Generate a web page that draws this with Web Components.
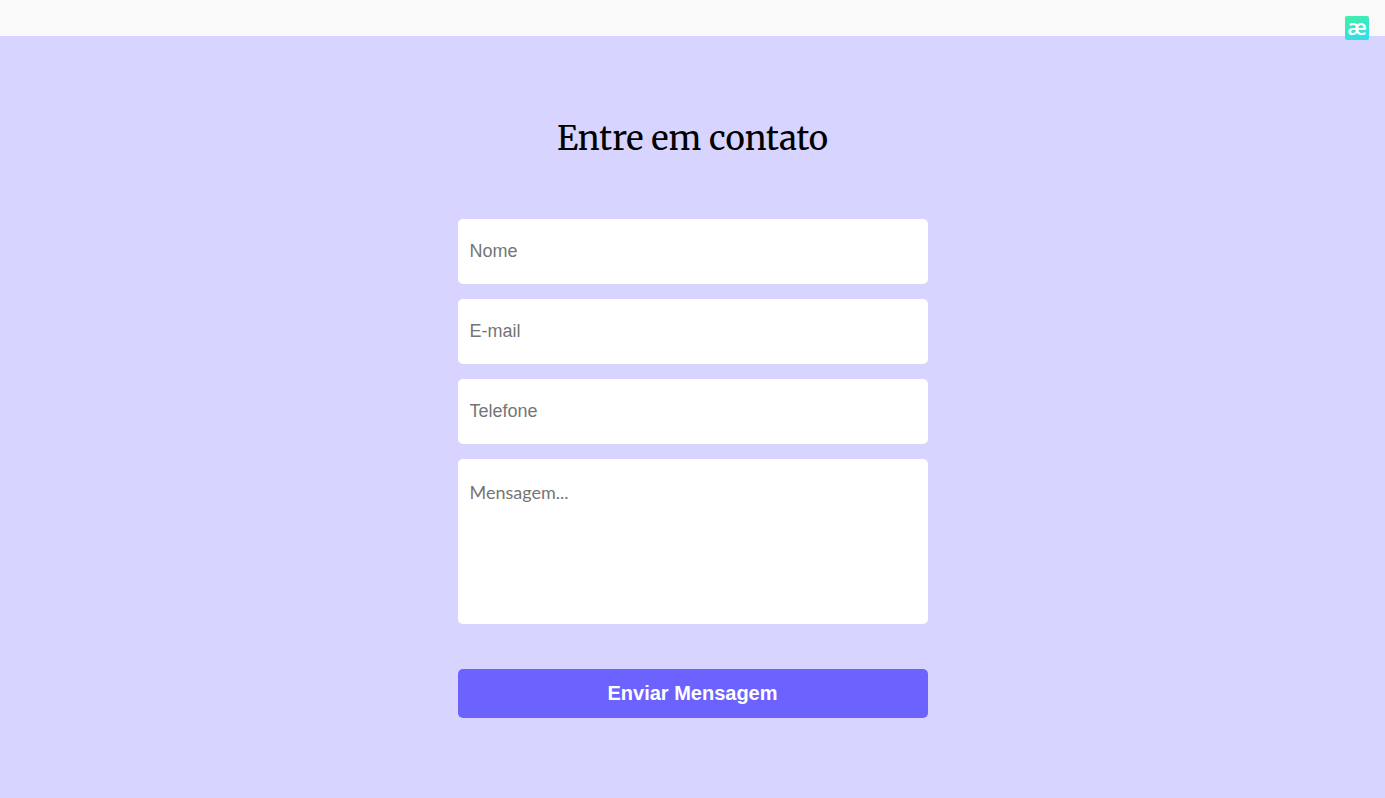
<!DOCTYPE html>
<html lang="pt-BR">
<head>
<meta charset="utf-8">
<meta name="viewport" content="width=device-width, initial-scale=1">
<title>Entre em contato</title>
<style>
  body { margin: 0; background: #f9f9f9; font-family: Lato, sans-serif; }
</style>
</head>
<body>
<contact-page>
  <brand-badge slot="badge"></brand-badge>
  <contact-section>
    <span slot="title">Entre em contato</span>
    <contact-form></contact-form>
  </contact-section>
</contact-page>

<script>
  class BaseElement extends HTMLElement {
    constructor() {
      super();
      this.attachShadow({ mode: "open" }).innerHTML = this.constructor.markup;
    }
  }

  customElements.define("brand-badge", class extends BaseElement {
    static markup = `
      <style>
        :host { display: block; }
        a {
          display: flex; align-items: center; justify-content: center;
          width: 24px; height: 24px; border-radius: 2px;
          background: linear-gradient(160deg, #41f0a5, #2fdcf2);
          color: #fff; text-decoration: none;
          font: 600 22px/20px "Open Sans", sans-serif;
          padding-bottom: 4px; box-sizing: border-box;
        }
      </style>
      <a href="#">æ</a>`;
  });

  customElements.define("contact-page", class extends BaseElement {
    static markup = `
      <style>
        :host { display: flex; flex-direction: column; min-height: 100vh; position: relative; }
        header { height: 36px; background: #f9f9f9; }
        .badge { position: absolute; top: 16px; right: 16px; }
        main { flex: 1; display: grid; }
      </style>
      <header></header>
      <main><slot></slot></main>
      <div class="badge"><slot name="badge"></slot></div>`;
  });

  customElements.define("contact-section", class extends BaseElement {
    static markup = `
      <style>
        :host { display: block; background: #d7d4ff; padding: 80px 16px; }
        h2 {
          margin: 0 0 58px; text-align: center; color: #000;
          font: 400 33px/45px Merriweather, "DejaVu Serif", serif;
        }
      </style>
      <h2><slot name="title"></slot></h2>
      <slot></slot>`;
  });

  customElements.define("form-field", class extends HTMLElement {
    connectedCallback() {
      if (this.shadowRoot) return;
      const label = this.getAttribute("label");
      const type = this.getAttribute("type") || "text";
      const control = type === "textarea"
        ? `<textarea aria-label="${label}" placeholder="${label}"></textarea>`
        : `<input type="${type}" aria-label="${label}" placeholder="${label}">`;
      this.attachShadow({ mode: "open" }).innerHTML = `
        <style>
          :host { display: block; }
          input, textarea {
            display: block; box-sizing: border-box; width: 100%; margin: 0;
            border: 0; border-radius: 5px; background: #fff; color: #000;
          }
          input { height: 65px; padding: 0 12px; font: 18px "Liberation Sans", Arial, sans-serif; }
          textarea { height: 165px; padding: 22px 12px; resize: none; font: 18px/22px Lato, sans-serif; }
          ::placeholder { color: #757575; opacity: 1; }
        </style>${control}`;
    }
  });

  customElements.define("contact-form", class extends BaseElement {
    static markup = `
      <style>
        :host { display: block; max-width: 470px; margin: 0 auto; }
        form { display: flex; flex-direction: column; gap: 15px; }
        button {
          margin-top: 30px; padding: 13px; border: 0; border-radius: 5px;
          background: #6c63ff; color: #fff; cursor: pointer;
          font: 700 20px/23px "Liberation Sans", Arial, sans-serif;
        }
      </style>
      <form>
        <form-field label="Nome"></form-field>
        <form-field label="E-mail" type="email"></form-field>
        <form-field label="Telefone" type="tel"></form-field>
        <form-field label="Mensagem..." type="textarea"></form-field>
        <button type="submit">Enviar Mensagem</button>
      </form>`;
  });
</script>
</body>
</html>
